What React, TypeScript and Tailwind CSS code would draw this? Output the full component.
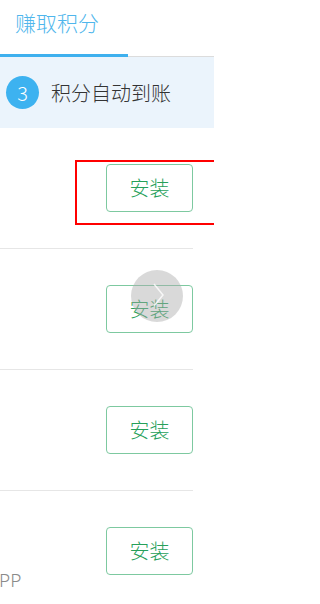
import React from "react";

const font = { fontFamily: '"Noto Sans CJK SC", "Noto Sans", sans-serif' };

function Row({ last, children }: { last?: boolean; children?: React.ReactNode }) {
  return (
    <div className={`relative h-[121px] ${last ? "" : "border-b border-[#e6e6e6]"} mr-[21px]`}>
      <div className="flex h-[120px] items-center justify-end">
        <button className="w-[87px] h-[48px] rounded-[4px] border border-[#7dc9a0] text-[#26a05a] text-[20px] leading-none bg-white font-light">
          安装
        </button>
      </div>
      {children}
    </div>
  );
}

export default function App() {
  return (
    <div className="relative w-[214px] h-[604px] overflow-hidden bg-white" style={font}>
      {/* header tab */}
      <div className="h-[54px] pl-[15px] pt-[8px]">
        <span className="text-[21px] leading-[28px] text-[#4fb6ec] font-light">赚取积分</span>
      </div>
      <div className="flex h-[3px]">
        <div className="w-[128px] bg-[#3eb0ee]" />
        <div className="flex-1 flex flex-col justify-end">
          <div className="h-px bg-[#dcdcdc]" />
        </div>
      </div>
      {/* step band */}
      <div className="h-[71px] bg-[#ebf4fc] flex items-center pl-[6px]">
        <div className="w-[33px] h-[33px] rounded-full bg-[#3db2f0] flex items-center justify-center text-white text-[20px] leading-none font-light">
          3
        </div>
        <span className="ml-[12px] text-[20px] leading-none text-[#333333] font-light">积分自动到账</span>
      </div>
      {/* rows */}
      <Row />
      <Row />
      <Row />
      <Row last>
        <div className="absolute left-[-1px] top-[80px] text-[19px] leading-none text-[#8a8a8a] font-light" style={{ fontFamily: '"Noto Sans", sans-serif' }}>
          PP
        </div>
      </Row>

      {/* red highlight box */}
      <div className="absolute left-[75px] top-[160px] w-[150px] h-[65px] border-2 border-[#ff0000]" />

      {/* floating gray circle */}
      <div className="absolute left-[131px] top-[270px] w-[52px] h-[52px] rounded-full bg-[rgba(170,170,170,0.45)]">
        <svg width="52" height="52" viewBox="0 0 52 52" className="absolute left-0 top-0">
          <polyline points="23,14 32,25 23,36" fill="none" stroke="rgba(255,255,255,0.8)" strokeWidth="1.5" />
        </svg>
      </div>
    </div>
  );
}
